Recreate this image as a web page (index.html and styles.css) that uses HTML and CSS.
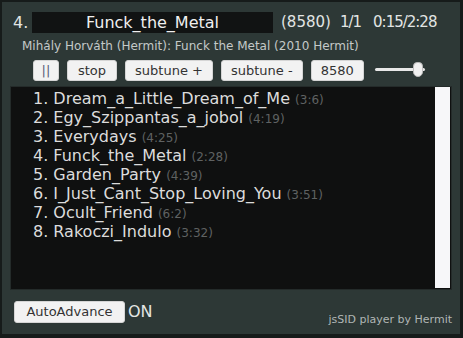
FILE: index.html
```
<!DOCTYPE html>
<html lang="en">
<head>
<meta charset="UTF-8">
<title>jsSID player</title>
<link rel="stylesheet" href="styles.css">
</head>
<body>

<div class="player">
    <!-- Now playing -->
    <div class="title-row">
        <span class="track-num">4.</span>
        <div class="track-title">Funck_the_Metal</div>
        <span class="chip">(8580)</span>
        <span class="subtune">1/1</span>
        <span class="time">0:15/2:28</span>
    </div>
    <div class="author">Mihály Horváth (Hermit): Funck the Metal (2010 Hermit)</div>

    <!-- Controls -->
    <div class="controls">
        <button class="btn btn-pause">||</button>
        <button class="btn btn-stop">stop</button>
        <button class="btn">subtune +</button>
        <button class="btn">subtune -</button>
        <button class="btn">8580</button>
        <div class="volume">
            <div class="volume-track"></div>
            <div class="volume-thumb"></div>
        </div>
    </div>

    <!-- Playlist -->
    <div class="playlist">
        <ol class="tracks">
            <li>1. Dream_a_Little_Dream_of_Me <span class="len">(3:6)</span></li>
            <li>2. Egy_Szippantas_a_jobol <span class="len">(4:19)</span></li>
            <li>3. Everydays <span class="len">(4:25)</span></li>
            <li>4. Funck_the_Metal <span class="len">(2:28)</span></li>
            <li>5. Garden_Party <span class="len">(4:39)</span></li>
            <li>6. I_Just_Cant_Stop_Loving_You <span class="len">(3:51)</span></li>
            <li>7. Ocult_Friend <span class="len">(6:2)</span></li>
            <li>8. Rakoczi_Indulo <span class="len">(3:32)</span></li>
        </ol>
        <div class="scrollbar"></div>
    </div>

    <!-- Footer -->
    <div class="footer">
        <button class="btn btn-auto">AutoAdvance</button>
        <span class="auto-state">ON</span>
        <span class="credit">jsSID player by Hermit</span>
    </div>
</div>

</body>
</html>
```
FILE: styles.css
```
/* Base */
body {
    margin: 0;
    background-color: #161b1a;
    font-family: "DejaVu Sans", Verdana, sans-serif;
    color: #d8dcdb;
}

.player {
    margin: 2px;
    width: 458px;
    height: 332px;
    box-sizing: border-box;
    background-color: #2d3836;
    padding: 9px 8px 0 8px;
}

/* Title row */
.title-row {
    display: flex;
    align-items: center;
    height: 22px;
    font-size: 15px;
    color: #e2e5e4;
}

.track-num {
    width: 19px;
    padding-left: 3px;
    font-size: 16px;
}

.track-title {
    width: 241px;
    height: 21px;
    line-height: 21px;
    font-size: 16px;
    background-color: #111313;
    text-align: center;
    color: #f0f0f0;
}

.chip {
    margin-left: 8px;
}

.subtune {
    margin-left: 9px;
    letter-spacing: -1px;
}

.time {
    margin-left: 12px;
    letter-spacing: -1px;
}

.author {
    margin-top: 6px;
    padding-left: 12px;
    font-size: 12px;
    color: #c4c9c8;
}

/* Controls */
.controls {
    display: flex;
    align-items: center;
    gap: 8px;
    margin-top: 6px;
    padding-left: 23px;
    height: 22px;
}

.btn {
    font-family: "DejaVu Sans", Verdana, sans-serif;
    font-size: 13px;
    height: 21px;
    padding: 0 9px;
    background-color: #f2f2f2;
    color: #333;
    border: 1px solid #d5d5d5;
    border-radius: 3px;
}

.btn-pause {
    width: 26px;
    padding: 0;
    color: #5a5f78;
}

.btn-stop {
    padding: 0 10px;
}

.volume {
    position: relative;
    width: 56px;
    height: 18px;
    margin-left: 3px;
}

.volume-track {
    position: absolute;
    left: 0;
    right: 6px;
    top: 7px;
    height: 3px;
    border-radius: 2px;
    background-color: #e8e8e8;
}

.volume-thumb {
    position: absolute;
    left: 38px;
    top: 1px;
    width: 10px;
    height: 15px;
    border-radius: 5px 5px 6px 6px;
    background-color: #f0f0f0;
    border: 1px solid #bbb;
    box-sizing: border-box;
}

/* Playlist */
.playlist {
    display: flex;
    margin-top: 5px;
    width: 442px;
    height: 204px;
    background-color: #0f1010;
    border: 1px solid #242b2a;
    box-sizing: border-box;
}

.tracks {
    flex: 1;
    list-style: none;
    margin: 0;
    padding: 2px 0 0 22px;
    font-size: 16px;
    line-height: 19px;
    color: #dcdcdc;
}

.len {
    font-size: 12px;
    line-height: 1;
    color: #5f6262;
}

.scrollbar {
    width: 15px;
    margin: 0 1px 1px 0;
    background-color: #f7f7f9;
}

/* Footer */
.footer {
    display: flex;
    align-items: center;
    margin-top: 7px;
    padding-left: 4px;
}

.btn-auto {
    height: 22px;
    width: 111px;
    padding: 0;
    font-size: 13px;
}

.auto-state {
    margin-left: 3px;
    font-size: 16px;
    color: #e4e6e5;
}

.credit {
    margin-left: auto;
    margin-top: 16px;
    font-size: 11px;
    color: #b0b6b5;
}
```
